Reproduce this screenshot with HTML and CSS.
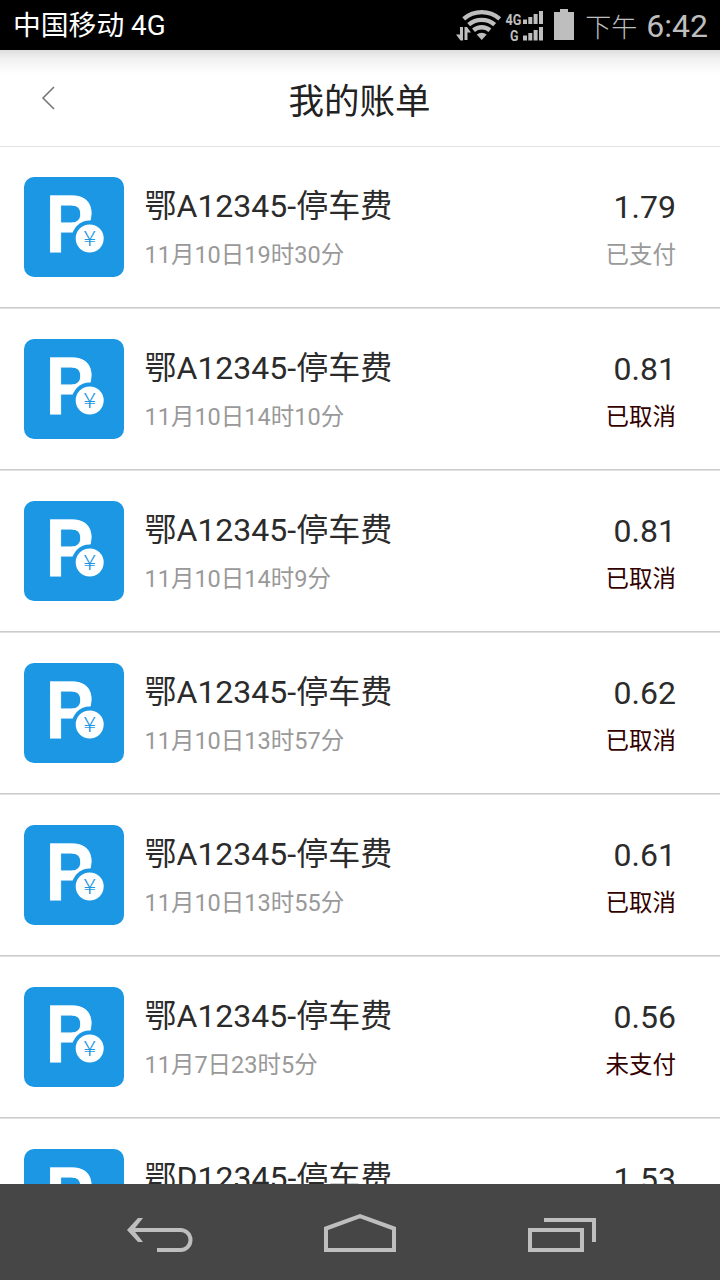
FILE: index.html
```
<!DOCTYPE html>
<html lang="zh-CN">
<head>
  <meta charset="utf-8">
  <title>我的账单</title>
  <link rel="stylesheet" href="styles.css">
</head>
<body>
  <!-- shared parking icon -->
  <svg class="defs" width="0" height="0">
    <symbol id="parking" viewBox="0 0 100 100">
      <rect width="100" height="100" rx="10" fill="#1b97e3"/>
      <text class="icon-p" transform="translate(21.4 74.5) scale(.88 1)">P</text>
      <circle cx="65.7" cy="61.5" r="18" fill="#1b97e3"/>
      <circle cx="65.7" cy="61.5" r="14" fill="#fff"/>
      <text class="icon-yen" transform="translate(65.7 69.2) scale(1.12 1)">¥</text>
    </symbol>
  </svg>

  <div class="status-bar">
    <span class="carrier">中国移动 4G</span>
    <svg class="signals" width="120" height="50" viewBox="455 0 120 50" fill="#bebebe">
      <!-- data arrows -->
      <path d="M460 27h3v13.500h-2.500L456 34.500h4zM464.500 27h2.500l4 5.500h-3.500V40h-3z"/>
      <!-- wifi -->
      <g fill="none" stroke="#bebebe" stroke-width="4.400">
        <path d="M463.700 18.800A27.700 27.700 0 0 1 499.700 18.800"/>
        <path d="M468.700 24.700A20 20 0 0 1 494.700 24.700"/>
        <path d="M473.500 30.300A12.700 12.700 0 0 1 489.900 30.300"/>
      </g>
      <path d="M476.700 34.500Q481.700 31 486.700 34.500L481.700 40z"/>
      <text class="net" x="505.500" y="24.500" textLength="16" lengthAdjust="spacingAndGlyphs">4G</text>
      <text class="net" x="510" y="40.500" textLength="8.500" lengthAdjust="spacingAndGlyphs">G</text>
      <path d="M523 19.500h4v4.500h-4zM528.300 17h4v7h-4zM533.600 14h4v10h-4zM539 11h4v13h-4z"/>
      <path d="M523 35.500h4v5h-4zM528.300 33h4v7.500h-4zM533.600 30h4v10.500h-4zM539 27h4v13.500h-4z"/>
      <!-- battery -->
      <path d="M560 9h8v3h6v28h-20V12h6z"/>
    </svg>
    <span class="period">下午</span>
    <span class="clock">6:42</span>
  </div>

  <div class="header">
    <svg class="back" width="20" height="26" viewBox="0 0 20 26">
      <path d="M14 2L3 13L14 24" fill="none" stroke="#777" stroke-width="1.6"/>
    </svg>
    <h1>我的账单</h1>
  </div>

  <div class="bills">
    <div class="bill">
      <svg class="icon"><use href="#parking"/></svg>
      <div class="info">
        <div class="name">鄂A12345-停车费</div>
        <div class="date">11月10日19时30分</div>
      </div>
      <div class="pay">
        <div class="amount">1.79</div>
        <div class="state paid">已支付</div>
      </div>
    </div>
    <div class="bill">
      <svg class="icon"><use href="#parking"/></svg>
      <div class="info">
        <div class="name">鄂A12345-停车费</div>
        <div class="date">11月10日14时10分</div>
      </div>
      <div class="pay">
        <div class="amount">0.81</div>
        <div class="state">已取消</div>
      </div>
    </div>
    <div class="bill">
      <svg class="icon"><use href="#parking"/></svg>
      <div class="info">
        <div class="name">鄂A12345-停车费</div>
        <div class="date">11月10日14时9分</div>
      </div>
      <div class="pay">
        <div class="amount">0.81</div>
        <div class="state">已取消</div>
      </div>
    </div>
    <div class="bill">
      <svg class="icon"><use href="#parking"/></svg>
      <div class="info">
        <div class="name">鄂A12345-停车费</div>
        <div class="date">11月10日13时57分</div>
      </div>
      <div class="pay">
        <div class="amount">0.62</div>
        <div class="state">已取消</div>
      </div>
    </div>
    <div class="bill">
      <svg class="icon"><use href="#parking"/></svg>
      <div class="info">
        <div class="name">鄂A12345-停车费</div>
        <div class="date">11月10日13时55分</div>
      </div>
      <div class="pay">
        <div class="amount">0.61</div>
        <div class="state">已取消</div>
      </div>
    </div>
    <div class="bill">
      <svg class="icon"><use href="#parking"/></svg>
      <div class="info">
        <div class="name">鄂A12345-停车费</div>
        <div class="date">11月7日23时5分</div>
      </div>
      <div class="pay">
        <div class="amount">0.56</div>
        <div class="state">未支付</div>
      </div>
    </div>
    <div class="bill">
      <svg class="icon"><use href="#parking"/></svg>
      <div class="info">
        <div class="name">鄂D12345-停车费</div>
      </div>
      <div class="pay">
        <div class="amount">1.53</div>
      </div>
    </div>
  </div>

  <div class="nav-bar">
    <svg width="72" height="40" viewBox="0 0 72 40" fill="none" stroke="#bebebe" stroke-width="4">
      <path d="M8 16H56.500A10 10 0 0 1 56.500 36H33"/>
      <path d="M14 4H19L9.500 16L19 28H14L3 16z" fill="#bebebe" stroke="none"/>
    </svg>
    <svg width="72" height="40" viewBox="0 0 72 40" fill="none" stroke="#bebebe" stroke-width="4">
      <path d="M2 36V14.500L36 2.200L70 14.500V36z"/>
    </svg>
    <svg width="72" height="40" viewBox="0 0 72 40" fill="none" stroke="#bebebe" stroke-width="4">
      <path d="M6 16H58V36H6zM20 6H70V28"/>
    </svg>
  </div>
</body>
</html>
```

FILE: styles.css
```
* {
  box-sizing: border-box;
}
body {
  margin: 0;
  width: 720px;
  height: 1280px;
  display: flex;
  flex-direction: column;
  overflow: hidden;
  background: #fff;
  color: #2b2b2b;
  font-family: Roboto, "Noto Sans CJK SC", sans-serif;
}
.defs {
  display: none;
}
.status-bar {
  height: 50px;
  flex: none;
  display: flex;
  align-items: center;
  background: #000;
  color: #bebebe;
  padding: 0 12px 0 13px;
  line-height: 50px;
}
.carrier {
  color: #fff;
  font-size: 27.8px;
  margin-right: auto;
  padding-top: 2px;
}
.net {
  font: bold 15px Roboto, sans-serif;
}
.period {
  font-size: 26px;
  font-weight: 300;
  margin: 5px 9px 0 10px;
}
.clock {
  font-size: 32px;
  padding-top: 2px;
}
.header {
  height: 97px;
  flex: none;
  display: flex;
  align-items: center;
  justify-content: center;
  border-bottom: 1px solid #e2e2e2;
  background: linear-gradient(#dedede, #f0f0f0 8px, #fff 24px);
}
.header h1 {
  margin: 8px 1px 0 0;
  font-size: 35.5px;
  font-weight: 400;
  line-height: 50px;
  color: #222;
}
.back {
  position: absolute;
  left: 40px;
  top: 85px;
}
.bills {
  flex: 1;
  overflow: hidden;
}
.bill {
  height: 162px;
  display: flex;
  padding: 30px 44px 0 24px;
  /* soft two-pixel divider */
  background: linear-gradient(#cbcbcb, #cbcbcb) 0 160px / 100% 1px no-repeat;
  border-bottom: 1px solid #e0e0e0;
}
.icon {
  width: 100px;
  height: 100px;
}
.icon-p {
  font: bold 82px "Liberation Sans", sans-serif;
  fill: #fff;
  stroke: #fff;
  stroke-width: 0.8px;
}
.icon-yen {
  font: 300 21.5px "Noto Sans CJK SC", sans-serif;
  fill: #1b97e3;
  text-anchor: middle;
}
.info {
  flex: 1;
  margin-left: 20.5px;
}
.name, .amount {
  font-size: 32px;
  line-height: 48px;
  margin-top: 5px;
}
.date, .state {
  font-size: 23.5px;
  line-height: 34px;
  margin-top: 8px;
}
.date {
  color: #999;
}
.pay {
  text-align: right;
}
.amount {
  padding-top: 1px;
  margin-bottom: -1px;
}
.state {
  color: #330000;
}
.state.paid {
  color: #999;
}
.nav-bar {
  height: 96px;
  flex: none;
  display: flex;
  align-items: center;
  justify-content: center;
  gap: 128px;
  padding-top: 4px;
  background: #464646;
}
```
